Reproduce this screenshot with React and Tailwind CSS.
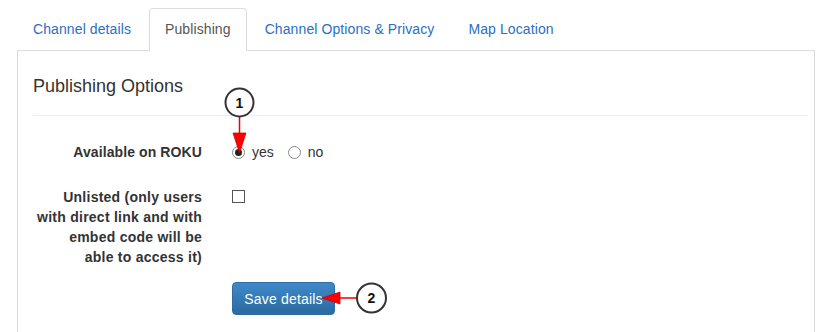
const FONT = { fontFamily: '"Liberation Sans", Arial, Helvetica, sans-serif' };

function Tab({ label, active }) {
  if (active) {
    return (
      <div className="mr-[2px] -mb-px rounded-t-[4px] border border-b-0 border-[#ddd] bg-white px-[15px] py-[10px] leading-5 tracking-[0.1px] text-[#555]">
        {label}
      </div>
    );
  }
  return (
    <div className="mr-[2px] border border-transparent px-[15px] py-[10px] leading-5 tracking-[0.1px] text-[#2a6fc4]">
      {label}
    </div>
  );
}

function Radio({ checked }) {
  return (
    <span className="flex h-[13px] w-[13px] items-center justify-center rounded-full border border-[#8a8a8a] bg-white">
      {checked && <span className="h-[7px] w-[7px] rounded-full bg-[#222]" />}
    </span>
  );
}

function Callouts() {
  return (
    <svg className="pointer-events-none absolute left-0 top-0" width="828" height="332">
      <line x1="239.5" y1="117" x2="239.5" y2="134" stroke="#e00" strokeWidth="1.5" />
      <polygon points="233,133 246,133 239.5,153" fill="#f00" stroke="#c00" strokeWidth="0.75" />
      <circle cx="239.5" cy="102.5" r="14" fill="white" stroke="#333" strokeWidth="2" />
      <text x="239.5" y="107.5" textAnchor="middle" fontSize="14" fontWeight="bold" fill="#111" style={FONT}>1</text>

      <line x1="338" y1="298" x2="357" y2="298" stroke="#e00" strokeWidth="1.5" />
      <polygon points="322,298 340,292 340,304" fill="#f00" stroke="#c00" strokeWidth="0.75" />
      <circle cx="371.5" cy="298" r="14.5" fill="white" stroke="#333" strokeWidth="2" />
      <text x="371.5" y="303" textAnchor="middle" fontSize="14" fontWeight="bold" fill="#111" style={FONT}>2</text>
    </svg>
  );
}

export default function App() {
  return (
    <div className="relative h-[332px] w-[828px] overflow-hidden bg-white text-[14px] text-[#333]" style={FONT}>
      <div className="pl-[17px] pt-[8px]">
        <div className="flex">
          <Tab label="Channel details" />
          <Tab label="Publishing" active />
          <Tab label="Channel Options & Privacy" />
          <Tab label="Map Location" />
        </div>

        <div className="h-[300px] w-[798px] border border-b-0 border-[#ddd] pl-[15px] pr-[6px]">
          <h3 className="mt-[25px] text-[18px] leading-5 text-[#333]">Publishing Options</h3>
          <div className="mt-[19px] border-t border-[#eee]" />

          <div className="mt-[26px] flex items-center">
            <div className="w-[169px] text-right font-bold leading-5 tracking-[0.1px]">Available on ROKU</div>
            <div className="ml-[30px] flex items-center">
              <Radio checked />
              <span className="ml-[7px] leading-5">yes</span>
              <span className="ml-[14px]"><Radio /></span>
              <span className="ml-[7px] leading-5">no</span>
            </div>
          </div>

          <div className="mt-[25px] flex items-start">
            <div className="w-[169px] text-right font-bold leading-5 tracking-[0.25px]">
              Unlisted (only users
              <br />
              with direct link and with
              <br />
              embed code will be
              <br />
              able to access it)
            </div>
            <div className="ml-[30px] mt-[3px] h-[13px] w-[13px] border border-[#555] bg-white" />
          </div>

          <div className="ml-[199px] mt-[15px]">
            <button className="h-[33px] w-[103px] rounded-[4px] border border-[#2e6da4] bg-gradient-to-b from-[#3f89c9] to-[#2b6aa2] leading-5 tracking-[0.2px] text-white">
              Save details
            </button>
          </div>
        </div>
      </div>
      <Callouts />
    </div>
  );
}
